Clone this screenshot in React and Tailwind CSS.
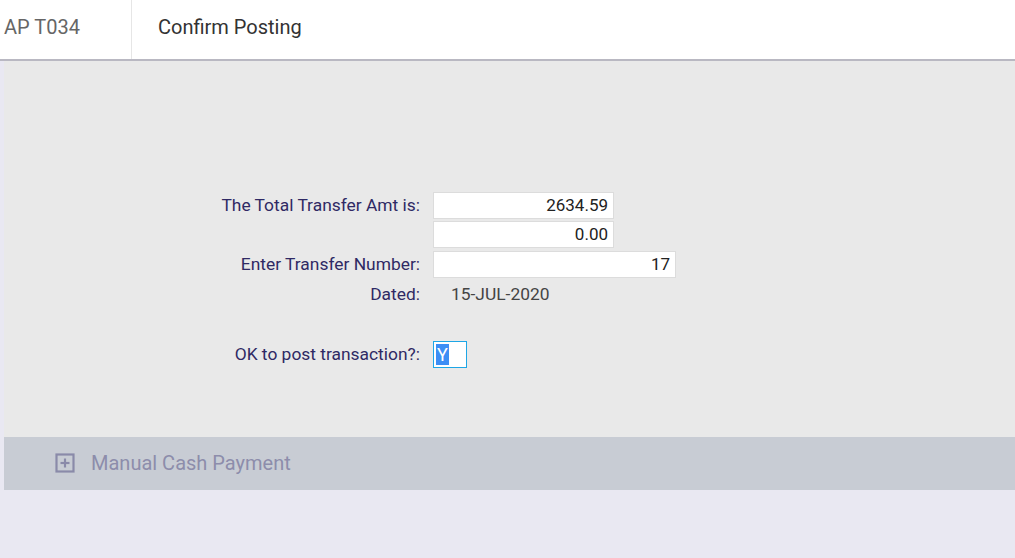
import React from 'react';

function Field({ value, width = 'w-[181px]' }) {
  return (
    <div className={`${width} h-[27px] bg-white border border-[#dcdcdc] flex items-center justify-end pr-[5px] text-[17px] text-[#222]`}>
      {value}
    </div>
  );
}

function Row({ label, children, className = '' }) {
  return (
    <div className={`flex items-center ${className}`}>
      <div className="w-[416px] text-right text-[17.4px] text-[#2f2964]">{label}</div>
      <div className="ml-[13px]">{children}</div>
    </div>
  );
}

export default function App() {
  return (
    <div className="w-[1015px] h-[558px] bg-[#e9e8f2] font-['Roboto',sans-serif] overflow-hidden">
      {/* Header */}
      <div className="h-[61px] bg-white border-b-2 border-[#b9b8c2] flex">
        <div className="w-[132px] border-r border-[#e6e6e6] flex items-center pl-[4px] pb-[5px] text-[20px] text-[#666]">
          AP T034
        </div>
        <div className="flex items-center pl-[26px] pb-[5px] text-[20px] text-[#333]">Confirm Posting</div>
      </div>

      {/* Main panel */}
      <div className="ml-[4px] bg-[#e9e9e9]">
        <div className="h-[376px] pt-[131px]">
          <Row label="The Total Transfer Amt is:">
            <Field value="2634.59" />
          </Row>
          <Row label="" className="mt-[2px]">
            <Field value="0.00" />
          </Row>
          <Row label="Enter Transfer Number:" className="mt-[3px]">
            <Field value="17" width="w-[243px]" />
          </Row>
          <Row label="Dated:" className="mt-[2px] h-[28px]">
            <span className="pl-[18px] text-[17.4px] text-[#444]">15-JUL-2020</span>
          </Row>
          <Row label="OK to post transaction?:" className="mt-[33px]">
            <div className="w-[34px] h-[27px] bg-white border border-[#1ea6e6] flex items-center pl-[2px]">
              <span className="bg-[#3d8ef5] text-white text-[18px] leading-[21px] px-[1px]">Y</span>
            </div>
          </Row>
        </div>

        {/* Collapsible bar */}
        <div className="h-[53px] bg-[#c8ccd4] flex items-center pl-[51px] pb-[1px]">
          <svg width="20" height="20" viewBox="0 0 20 20" fill="none" stroke="#8a8aa9" strokeWidth="2.2">
            <rect x="1.5" y="1.5" width="17" height="17" />
            <line x1="10" y1="5.5" x2="10" y2="14.5" />
            <line x1="5.5" y1="10" x2="14.5" y2="10" />
          </svg>
          <span className="ml-[16px] text-[20px] text-[#8d8dab]">Manual Cash Payment</span>
        </div>
      </div>
    </div>
  );
}
